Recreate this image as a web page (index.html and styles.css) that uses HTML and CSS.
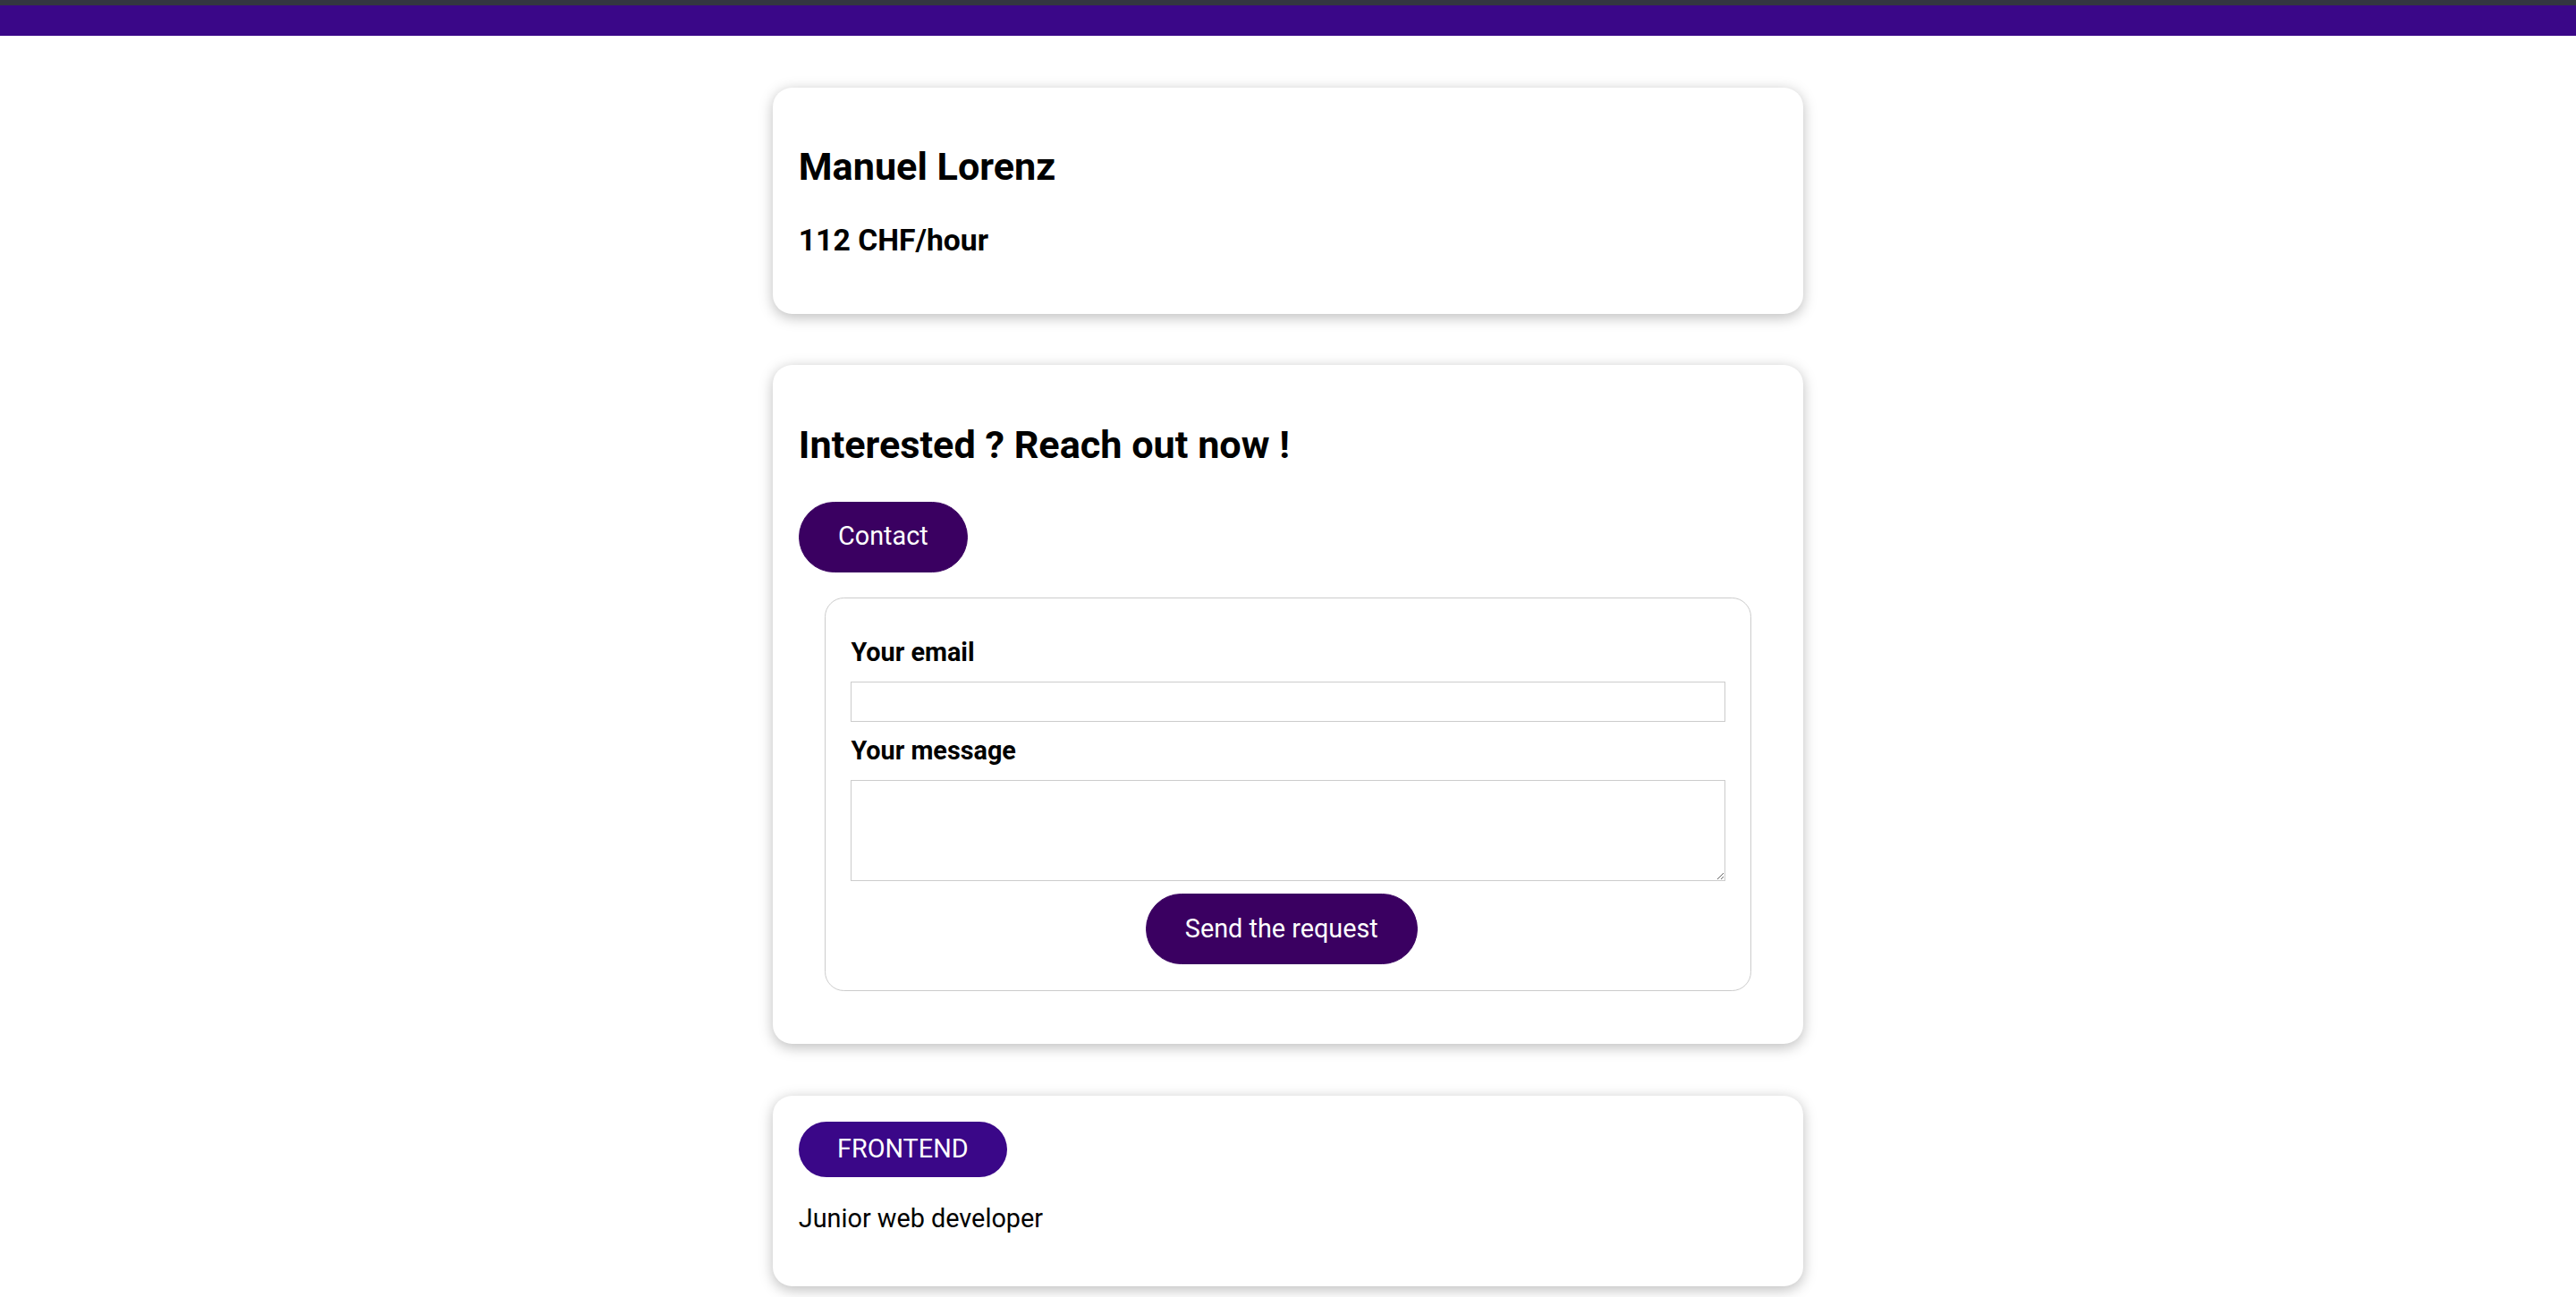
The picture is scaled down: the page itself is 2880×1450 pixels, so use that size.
FILE: index.html
```
<!DOCTYPE html>
<html lang="en">
<head>
<meta charset="utf-8">
<title>Coach details</title>
<link rel="stylesheet" href="styles.css">
</head>
<body>
<div class="topline"></div>
<header class="main-header"></header>
<main>
  <section>
    <div class="card">
      <h2>Manuel Lorenz</h2>
      <h3>112 CHF/hour</h3>
    </div>
  </section>
  <section>
    <div class="card">
      <header class="card-header">
        <h2>Interested ? Reach out now !</h2>
        <a class="btn" href="#contact">Contact</a>
      </header>
      <form class="contact-form">
        <div class="form-control">
          <label for="email">Your email</label>
          <input type="email" id="email">
        </div>
        <div class="form-control">
          <label for="message">Your message</label>
          <textarea id="message" rows="5"></textarea>
        </div>
        <div class="actions">
          <button class="btn" type="button">Send the request</button>
        </div>
      </form>
    </div>
  </section>
  <section>
    <div class="card">
      <span class="badge frontend">FRONTEND</span>
      <p>Junior web developer</p>
    </div>
  </section>
</main>
</body>
</html>
```
FILE: styles.css
```
* {
  box-sizing: border-box;
}

html {
  font-family: "Roboto", "Liberation Sans", sans-serif;
  font-size: 28.8px;
  line-height: 1.172;
}

body {
  margin: 0;
  color: #000;
  background: #fff;
}

.topline {
  height: 6px;
  background: #333640;
}

.main-header {
  height: 34px;
  background: #3a0788;
}

.card {
  border-radius: 21.6px;
  box-shadow: 0 3.6px 14.4px rgba(0, 0, 0, 0.26);
  padding: 28.8px;
  margin: 57.6px auto;
  max-width: 1152px;
  background: #fff;
}

h2 {
  font-size: 43.2px;
  font-weight: bold;
  margin: 35.86px 0;
}

.card-header h2 {
  margin-bottom: 37px;
}

h3 {
  font-size: 33.7px;
  font-weight: bold;
  margin: 33.7px 0;
}

p {
  margin: 30px 0 28.8px;
}

.btn {
  text-decoration: none;
  padding: 21.6px 43.2px;
  font: inherit;
  background-color: #3a0061;
  border: 1.8px solid #3a0061;
  color: #fff;
  cursor: pointer;
  border-radius: 54px;
  margin-right: 14.4px;
  display: inline-block;
}

.contact-form {
  margin: 28.8px 28.8px 31px;
  border: 1.8px solid #ccc;
  border-radius: 21.6px;
  padding: 28.8px;
}

.form-control {
  margin: 14.4px 0;
}

.form-control + .form-control {
  margin-top: 16px;
}

label {
  font-weight: bold;
  margin-bottom: 15.3px;
  display: block;
}

input,
textarea {
  display: block;
  width: 100%;
  font: inherit;
  border: 1.8px solid #ccc;
  padding: 2.7px;
  margin: 0;
}

input {
  height: 45px;
}

textarea {
  height: 113px;
}

.actions {
  text-align: center;
}

.badge {
  background-color: #ccc;
  color: #252525;
  border-radius: 54px;
  padding: 14.4px 43.2px;
  display: inline-block;
  margin-right: 14.4px;
}

.frontend {
  background-color: #3a0788;
  color: #fff;
}
```
